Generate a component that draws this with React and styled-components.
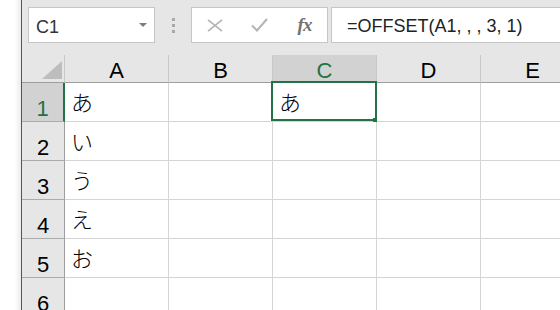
import React from "react";
import styled, { createGlobalStyle } from "styled-components";

const GlobalStyle = createGlobalStyle`
  html, body { margin: 0; padding: 0; background: #ffffff; }
  body {
    width: 560px; height: 310px; overflow: hidden;
    font-family: "Liberation Sans", "Noto Sans CJK JP", sans-serif;
  }
  * { box-sizing: border-box; }
`;

const GREEN = "#217346";

const Window = styled.div`
  display: flex;
  width: 560px;
  height: 310px;
  overflow: hidden;
`;

const SideStrip = styled.div`
  flex: 0 0 21px;
  background: linear-gradient(to right, #ffffff 70%, #ececec);
`;

const Workbook = styled.div`
  flex: 1;
  display: flex;
  flex-direction: column;
  border-left: 1px solid ${GREEN};
  overflow: hidden;
  min-width: 0;
`;

const FormulaBar = styled.div`
  flex: 0 0 55px;
  display: flex;
  align-items: flex-start;
  padding: 7px 0 0 6px;
  background: #e6e6e6;
`;

const NameBox = styled.div`
  flex: 0 0 127px;
  height: 36px;
  display: flex;
  justify-content: space-between;
  padding: 0 7px 0 7px;
  background: #ffffff;
  border: 1px solid #c6c6c6;
`;

const NameText = styled.span`
  padding-top: 8px;
  font-size: 18px;
  line-height: 22px;
  color: #333333;
`;

const Caret = styled.span`
  align-self: center;
  width: 0;
  height: 0;
  border-left: 4px solid transparent;
  border-right: 4px solid transparent;
  border-top: 4px solid #7c7c7c;
`;

const Grip = styled.div`
  display: flex;
  flex-direction: column;
  gap: 3px;
  margin: 11px 16px 0 17px;
`;

const Dot = styled.span`
  width: 3px;
  height: 3px;
  background: #a8a8a8;
`;

const ActionBox = styled.div`
  flex: 0 0 137px;
  height: 36px;
  display: flex;
  background: #ffffff;
  border: 1px solid #c6c6c6;
`;

const Slot = styled.div`
  flex: 0 0 45px;
  display: flex;
  align-items: center;
  justify-content: center;
  color: #b4b4b4;
`;

const Fx = styled.span`
  font-family: "Liberation Serif", serif;
  font-style: italic;
  font-weight: bold;
  font-size: 19px;
  color: #737373;
  letter-spacing: -1px;
`;

const FormulaInput = styled.div`
  flex: 1;
  height: 36px;
  margin-left: 3px;
  padding: 7px 0 0 15px;
  background: #ffffff;
  border: 1px solid #c6c6c6;
  border-right: none;
  font-size: 18px;
  line-height: 22px;
  color: #222222;
  white-space: pre;
`;

const Sheet = styled.div`
  display: grid;
  grid-template-columns: 43px repeat(5, 104px);
  grid-template-rows: 28px repeat(6, 39px);
`;

const Corner = styled.div`
  display: flex;
  justify-content: flex-end;
  align-items: flex-end;
  padding: 0 2px 3px 0;
  background: #e6e6e6;
  border-right: 1px solid #c8c8c8;
  border-bottom: 1px solid #9e9e9e;
`;

const Triangle = styled.span`
  width: 0;
  height: 0;
  border-left: 20px solid transparent;
  border-bottom: 18px solid #bdbdbd;
`;

const ColHeader = styled.div`
  display: flex;
  justify-content: center;
  padding-top: 4px;
  font-size: 22px;
  line-height: 24px;
  background: ${(p) => (p.$active ? "#d2d2d2" : "#e6e6e6")};
  color: ${(p) => (p.$active ? GREEN : "#000000")};
  border-right: 1px solid #c8c8c8;
  border-bottom: ${(p) => (p.$active ? `2px solid ${GREEN}` : "1px solid #9e9e9e")};
`;

const RowHeader = styled.div`
  display: flex;
  justify-content: center;
  padding-top: 14px;
  font-size: 22px;
  line-height: 24px;
  background: ${(p) => (p.$active ? "#d2d2d2" : "#e6e6e6")};
  color: ${(p) => (p.$active ? GREEN : "#000000")};
  border-bottom: 1px solid #ababab;
  border-right: ${(p) => (p.$active ? `2px solid ${GREEN}` : "1px solid #9e9e9e")};
`;

const Cell = styled.div`
  position: relative;
  padding: 4px 0 0 6px;
  font-family: "Noto Sans CJK JP", "Liberation Sans", sans-serif;
  font-weight: 300;
  font-size: 22px;
  line-height: 28px;
  color: #000000;
  background: #ffffff;
  border-right: 1px solid #d4d4d4;
  border-bottom: 1px solid #d4d4d4;
`;

const Selection = styled.div`
  position: absolute;
  left: -2px;
  top: -2px;
  right: -1px;
  bottom: 0;
  border: 2px solid ${GREEN};
  pointer-events: none;
`;

const FillHandle = styled.span`
  position: absolute;
  right: -3px;
  bottom: -4px;
  width: 5px;
  height: 5px;
  background: ${GREEN};
`;

const CloseIcon = () => (
  <svg width="16" height="13" viewBox="0 0 16 13" fill="none">
    <path d="M1 0.8 L15 12.2 M15 0.8 L1 12.2" stroke="currentColor" strokeWidth="1.7" />
  </svg>
);

const CheckIcon = () => (
  <svg width="17" height="14" viewBox="0 0 17 14" fill="none">
    <path d="M1 7.5 L6 12.5 L16 1" stroke="currentColor" strokeWidth="2" />
  </svg>
);

const columns = ["A", "B", "C", "D", "E"];
const data = {
  1: { A: "あ", C: "あ" },
  2: { A: "い" },
  3: { A: "う" },
  4: { A: "え" },
  5: { A: "お" },
  6: {},
};

export default function App() {
  return (
    <>
      <GlobalStyle />
      <Window>
        <SideStrip />
        <Workbook>
          <FormulaBar>
            <NameBox>
              <NameText>C1</NameText>
              <Caret />
            </NameBox>
            <Grip>
              <Dot />
              <Dot />
              <Dot />
            </Grip>
            <ActionBox>
              <Slot>
                <CloseIcon />
              </Slot>
              <Slot>
                <CheckIcon />
              </Slot>
              <Slot>
                <Fx>fx</Fx>
              </Slot>
            </ActionBox>
            <FormulaInput>=OFFSET(A1, , , 3, 1)</FormulaInput>
          </FormulaBar>
          <Sheet>
            <Corner>
              <Triangle />
            </Corner>
            {columns.map((c) => (
              <ColHeader key={c} $active={c === "C"}>
                {c}
              </ColHeader>
            ))}
            {Object.keys(data).map((r) => (
              <React.Fragment key={r}>
                <RowHeader $active={r === "1"}>{r}</RowHeader>
                {columns.map((c) => (
                  <Cell key={c}>
                    {data[r][c] || ""}
                    {r === "1" && c === "C" && (
                      <Selection>
                        <FillHandle />
                      </Selection>
                    )}
                  </Cell>
                ))}
              </React.Fragment>
            ))}
          </Sheet>
        </Workbook>
      </Window>
    </>
  );
}
